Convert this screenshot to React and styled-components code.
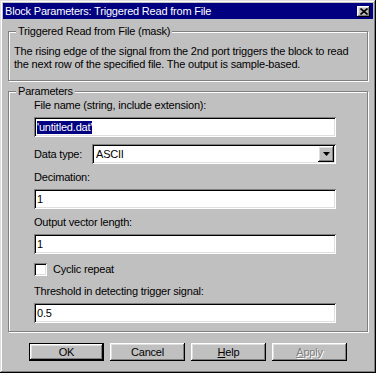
import React from 'react'
import styled, { createGlobalStyle, css } from 'styled-components'

const Global = createGlobalStyle`
  html, body {
    margin: 0;
    padding: 0;
    background: #c0c0c0;
  }
`

const raised = css`
  box-shadow: inset -1px -1px #000, inset 1px 1px #fff,
    inset -2px -2px #808080, inset 2px 2px #dfdfdf;
`

const sunken = css`
  box-shadow: inset 1px 1px #808080, inset -1px -1px #fff,
    inset 2px 2px #000, inset -2px -2px #dfdfdf;
`

const Window = styled.div`
  width: 376px;
  height: 373px;
  box-sizing: border-box;
  padding: 3px;
  background: #c0c0c0;
  box-shadow: inset -1px -1px #000, inset 1px 1px #dfdfdf,
    inset -2px -2px #808080, inset 2px 2px #fff;
  display: flex;
  flex-direction: column;
  font-family: 'Liberation Sans', Arial, sans-serif;
  font-size: 11px;
  letter-spacing: -0.2px;
  color: #000;
  white-space: nowrap;
`

const TitleBar = styled.div`
  height: 16px;
  display: flex;
  align-items: center;
  justify-content: space-between;
  padding: 0 3px 0 2px;
  background: #000080;
  color: #fff;
`

const CloseButton = styled.div`
  width: 13px;
  height: 11px;
  background: #c0c0c0;
  display: flex;
  align-items: center;
  justify-content: center;
  ${raised}
`

const Body = styled.div`
  padding: 0 5px;
  display: flex;
  flex-direction: column;
`

const Group = styled.div`
  position: relative;
  margin-top: ${({ $top }) => $top}px;
  padding: ${({ $pad }) => $pad};
  border: 1px solid #808080;
  box-shadow: inset 1px 1px #fff, 1px 1px #fff;
  line-height: 13px;
`

const Legend = styled.span`
  position: absolute;
  top: -7px;
  left: 7px;
  padding: 0 2px;
  background: #c0c0c0;
  line-height: 13px;
`

const Form = styled.div`
  display: flex;
  flex-direction: column;
  gap: 7px;
`

const Field = styled.div`
  display: flex;
  flex-direction: column;
  gap: 5px;
`

const Edit = styled.div`
  height: 20px;
  box-sizing: border-box;
  padding: 0 3px;
  display: flex;
  align-items: center;
  background: #fff;
  ${sunken}
`

const Selected = styled.span`
  background: #000080;
  color: #fff;
  line-height: 13px;
`

const Row = styled.div`
  display: flex;
  align-items: center;
`

const RowLabel = styled.span`
  width: 58px;
`

const Combo = styled(Edit)`
  flex: 1;
  padding: 2px 2px 2px 4px;
`

const ComboArrow = styled.div`
  margin-left: auto;
  width: 16px;
  height: 16px;
  background: #c0c0c0;
  display: flex;
  align-items: center;
  justify-content: center;
  ${raised}
`

const CheckRow = styled(Row)`
  height: 17px;
  gap: 6px;
`

const CheckBox = styled.div`
  width: 13px;
  height: 13px;
  background: #fff;
  ${sunken}
`

const Buttons = styled.div`
  margin-top: 11px;
  display: flex;
  justify-content: center;
  gap: 6px;
`

const Button = styled.div`
  width: 75px;
  height: 18px;
  box-sizing: border-box;
  display: flex;
  align-items: center;
  justify-content: center;
  background: #c0c0c0;
  ${raised}
  ${({ $default }) =>
    $default &&
    css`
      border: 1px solid #000;
    `}
  ${({ $disabled }) =>
    $disabled &&
    css`
      color: #808080;
      text-shadow: 1px 1px #fff;
    `}
`

const App = () => {
  return (
    <>
      <Global />
      <Window>
        <TitleBar>
          <span>Block Parameters: Triggered Read from File</span>
          <CloseButton>
            <svg width='8' height='7' viewBox='0 0 8 7'>
              <path d='M0.5 0.5 L7.5 6.5 M7.5 0.5 L0.5 6.5' stroke='#000' strokeWidth='1.6' />
            </svg>
          </CloseButton>
        </TitleBar>
        <Body>
          <Group $top={12} $pad='13px 5px 9px 5px'>
            <Legend>Triggered Read from File (mask)</Legend>
            The rising edge of the signal from the 2nd port triggers the block to read
            <br />
            the next row of the specified file. The output is sample-based.
          </Group>
          <Group $top={10} $pad='7px 31px 8px 25px'>
            <Legend>Parameters</Legend>
            <Form>
              <Field>
                <span>File name (string, include extension):</span>
                <Edit>
                  <Selected>'untitled.dat'</Selected>
                </Edit>
              </Field>
              <Row>
                <RowLabel>Data type:</RowLabel>
                <Combo>
                  ASCII
                  <ComboArrow>
                    <svg width='7' height='4' viewBox='0 0 7 4'>
                      <polygon points='0,0 7,0 3.5,4' fill='#000' />
                    </svg>
                  </ComboArrow>
                </Combo>
              </Row>
              <Field>
                <span>Decimation:</span>
                <Edit>1</Edit>
              </Field>
              <Field>
                <span>Output vector length:</span>
                <Edit>1</Edit>
              </Field>
              <CheckRow>
                <CheckBox />
                <span>Cyclic repeat</span>
              </CheckRow>
              <Field>
                <span>Threshold in detecting trigger signal:</span>
                <Edit>0.5</Edit>
              </Field>
            </Form>
          </Group>
          <Buttons>
            <Button $default>OK</Button>
            <Button>Cancel</Button>
            <Button>
              <span><u>H</u>elp</span>
            </Button>
            <Button $disabled>
              <span><u>A</u>pply</span>
            </Button>
          </Buttons>
        </Body>
      </Window>
    </>
  )
}

export default App
